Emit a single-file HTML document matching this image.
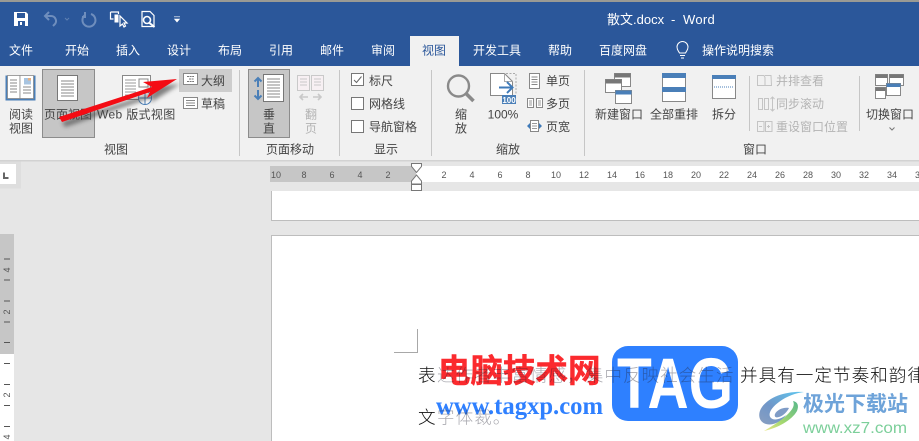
<!DOCTYPE html>
<html><head><meta charset="utf-8"><style>
html,body{margin:0;padding:0;background:#e6e6e6;width:919px;height:441px;overflow:hidden}
svg{display:block}
text{font-family:"Liberation Sans","Noto Sans CJK SC",sans-serif;font-size:12px;fill:#444}
.c{text-anchor:middle}
.w{fill:#fff}
.d{fill:#b4b4b4}
.r{font-size:9px;fill:#555;text-anchor:middle}
.vr{font-size:9px;fill:#555;text-anchor:middle}
.t{font-size:17.6px;fill:#111;font-weight:300}
.g{font-size:17.6px;fill:#a4a4a4;font-weight:300}
.o{font-size:17.6px;fill:#223;font-weight:300;opacity:.38}
</style></head><body>
<svg width="919" height="441" viewBox="0 0 919 441" xmlns="http://www.w3.org/2000/svg">
<defs><filter id="b" x="-20%" y="-50%" width="140%" height="200%"><feGaussianBlur stdDeviation="2.2"/></filter>
<linearGradient id="sw" x1="1" y1="0" x2="0" y2="1"><stop offset="0" stop-color="#5fc8f0"/><stop offset=".6" stop-color="#7096c8"/><stop offset="1" stop-color="#8a9fc0"/></linearGradient>
<linearGradient id="sg" x1="1" y1="0" x2="0" y2="1"><stop offset="0" stop-color="#58b88a"/><stop offset=".6" stop-color="#a5d870"/><stop offset="1" stop-color="#efe98a"/></linearGradient></defs>
<!-- backgrounds -->
<rect width="919" height="441" fill="#e6e6e6"/>
<rect width="919" height="2" fill="#9a9a94"/>
<rect y="2" width="919" height="64" fill="#2b579a"/>
<rect y="66" width="919" height="94" fill="#f1f1f1"/>
<rect y="160" width="919" height="1.500" fill="#d2d2d2"/>
<rect x="410" y="36" width="49" height="30" fill="#f1f1f1"/>
<!-- QAT -->
<path d="M14 12h12l2 2v12H14z" fill="#fff"/><rect x="17" y="13" width="8" height="5" fill="#2b579a"/><rect x="18" y="21" width="7" height="5" fill="#2b579a"/><rect x="20" y="22" width="2" height="3" fill="#fff"/>
<g fill="none" stroke="#6f8ebd" stroke-width="2"><path d="M45 16h6a5 5 0 0 1 4 8l-2 2"/><path d="M49 12l-4 4 4 4"/><path d="M91 14a6.500 6.500 0 1 1-6 1"/><path d="M85 12v5h-3"/></g>
<path d="M65 18l2 2 2-2" fill="none" stroke="#5f80b3"/>
<g fill="none" stroke="#fff" stroke-width="1.200"><path d="M110.500 12h8v2M110.500 12v7h3"/><rect x="114.500" y="14.500" width="4" height="8" fill="#fff" stroke="none"/><path d="M120 16l0 10 2.500-2 1.500 3 1.500-1-1.500-3h3z" fill="#2b579a"/><path d="M142 11.500h8l4 4v11h-12z"/><circle cx="147" cy="20" r="3.500" stroke-width="1.600"/><path d="M149.500 23l5 4" stroke-width="2"/></g>
<path d="M174 16.800h6M174.500 19h5l-2.500 3z" fill="#fff" stroke="#fff" stroke-width=".6"/>
<text x="607" y="24" style="font-size:13px" class="w">散文.docx</text><text x="671" y="24" style="font-size:13px" class="w">-</text><text x="683" y="24" style="font-size:13px;letter-spacing:.3px" class="w">Word</text>
<!-- tabs -->
<g class="tabs">
<text x="21" y="54.500" class="c w">文件</text><text x="77" y="54.500" class="c w">开始</text><text x="128" y="54.500" class="c w">插入</text><text x="179" y="54.500" class="c w">设计</text><text x="230" y="54.500" class="c w">布局</text><text x="281" y="54.500" class="c w">引用</text><text x="332" y="54.500" class="c w">邮件</text><text x="383" y="54.500" class="c w">审阅</text>
<text x="434" y="54.500" class="c" style="fill:#2b579a">视图</text>
<text x="497" y="54.500" class="c w">开发工具</text><text x="560" y="54.500" class="c w">帮助</text><text x="623" y="54.500" class="c w">百度网盘</text><text x="738" y="54.500" class="c w">操作说明搜索</text></g>
<path d="M679.500 53c-1-2-2.500-3-2.500-6a5.500 5.500 0 0 1 11 0c0 3-1.500 4-2.500 6zM680 55.500h5M681 58h3" fill="none" stroke="#fff"/>
<!-- selected -->
<rect x="42.500" y="69.500" width="52" height="68" fill="#c6c6c6" stroke="#8c8c8c"/>
<rect x="179" y="69" width="53" height="23" fill="#cdcdcd"/>
<rect x="248.500" y="69.500" width="41" height="68" fill="#c6c6c6" stroke="#8c8c8c"/>
<!-- seps -->
<g fill="#c6c6c6"><rect x="239" y="70" width="1" height="86"/><rect x="339" y="70" width="1" height="86"/><rect x="431" y="70" width="1" height="86"/><rect x="584" y="70" width="1" height="86"/><rect x="749" y="76" width="1" height="55"/><rect x="859" y="76" width="1" height="55"/></g>
<!-- read -->
<path d="M5.500 75.500h30v25h-30z" fill="#4a7fb8"/><rect x="7.500" y="75.500" width="12.500" height="23" fill="#fff" stroke="#8a8a8a" stroke-width=".8"/><rect x="20" y="75.500" width="13.500" height="23" fill="#fff" stroke="#8a8a8a" stroke-width=".8"/>
<path d="M10 80h7M10 83h7M10 86h7M10 89h7M10 92h7M23 87h8M23 90h8M23 93h8" stroke="#888"/><rect x="24" y="78" width="7" height="6.500" fill="#a8c4e0"/><rect x="28" y="78" width="3" height="2.500" fill="#e8b080"/>
<!-- doc -->
<rect x="57.500" y="75.500" width="20" height="25" fill="#fff" stroke="#777"/><path d="M61 81h13M61 84h13M61 87h13M61 90h13M61 93h13M61 96h13" stroke="#8a8a8a"/>
<!-- web -->
<rect x="122.500" y="75.500" width="28" height="24" fill="#fff" stroke="#888"/><path d="M125 80h11M125 83h11M125 86h11M125 89h11M125 92h11M125 95h11" stroke="#999"/><rect x="139" y="79" width="9" height="8" fill="none" stroke="#888"/>
<circle cx="145" cy="98" r="6.500" fill="#fff" stroke="#4a7fb8"/><path d="M138.500 98h13M145 91.500v13" stroke="#4a7fb8"/>
<!-- outline / draft -->
<rect x="183.500" y="73.500" width="14" height="11" fill="#fff" stroke="#888"/><path d="M187 76.500h7M189 79h5M187 81.500h7" stroke="#777" stroke-dasharray="2 .6"/>
<rect x="183.500" y="97.500" width="14" height="11" fill="#fff" stroke="#888"/><path d="M186 100.500h9M186 103h9M186 105.500h9" stroke="#888"/>
<!-- labels group 1 -->
<text x="21" y="118.500" class="c">阅读</text><text x="21" y="132.500" class="c">视图</text>
<text x="68" y="118.500" class="c">页面视图</text>
<text x="97" y="118.500" style="letter-spacing:.35px">Web 版式视图</text>
<text x="201" y="85">大纲</text><text x="201" y="108">草稿</text>
<text x="116" y="153.500" class="c">视图</text>
<!-- vertical -->
<rect x="263.500" y="74.500" width="20" height="27" fill="#fff" stroke="#777"/><path d="M267 79h13M267 82h13M267 85h13M267 88h13M267 91h13M267 94h13M267 97h13" stroke="#888"/>
<path d="M258 78v9M254.500 81.500L258 78l3.500 3.500M258 90v9M254.500 95.500L258 99l3.500-3.500" fill="none" stroke="#4a7fb8" stroke-width="2"/>
<text x="269" y="118.500" class="c">垂</text><text x="269" y="132.500" class="c">直</text>
<!-- flip disabled -->
<g fill="none" stroke="#c9c9c9"><rect x="297.500" y="75.500" width="12" height="15" fill="#f7f0f3"/><rect x="311.500" y="75.500" width="12" height="15" fill="#f7f0f3"/><path d="M300 79h7M300 82h7M300 85h7M314 79h7M314 82h7M314 85h7"/><path d="M300 97h8M303 94l-3 3 3 3M313 97h8M318 94l3 3-3 3" stroke-width="1.600"/></g>
<text x="311" y="118.500" class="c d">翻</text><text x="311" y="132.500" class="c d">页</text>
<text x="290" y="153.500" class="c">页面移动</text>
<!-- checks -->
<g fill="#fff" stroke="#777"><rect x="351.500" y="73.500" width="12" height="12"/><rect x="351.500" y="97.500" width="12" height="12"/><rect x="351.500" y="120.500" width="12" height="12"/></g>
<path d="M354 80l2.500 2.500 5-6" fill="none" stroke="#666"/>
<text x="369" y="85">标尺</text><text x="369" y="108">网格线</text><text x="369" y="131">导航窗格</text>
<text x="386" y="153.500" class="c">显示</text>
<!-- zoom -->
<circle cx="458.500" cy="86" r="10.500" fill="none" stroke="#8a8a8a" stroke-width="2.400"/><path d="M466.500 94l7 7" stroke="#8a8a8a" stroke-width="3.600"/>
<text x="461" y="118.500" class="c">缩</text><text x="461" y="132.500" class="c">放</text>
<path d="M490.500 73.500h14l8 8v14h-22z" fill="#fff" stroke="#888"/><path d="M504.500 73.500v8h8" fill="none" stroke="#aaa"/><path d="M506 73.500h10v20" fill="none" stroke="#aaa" stroke-dasharray="2 1.500"/>
<path d="M499 87.500h13M507 82l5.500 5.500-5.500 5.500" fill="none" stroke="#3f7ab8" stroke-width="2"/>
<rect x="502" y="95" width="14" height="9" fill="#4a7fb8"/><text x="509" y="103" class="c" style="font-size:8px;fill:#fff;font-weight:700">100</text>
<text x="503" y="118.500" class="c">100%</text>
<rect x="529.500" y="73.500" width="10" height="15" fill="#fff" stroke="#888"/><path d="M531.500 77h6M531.500 79.500h6M531.500 82h6M531.500 84.500h6" stroke="#888"/>
<g fill="#fff" stroke="#888"><rect x="527.500" y="98.500" width="6" height="9"/><rect x="536.500" y="98.500" width="6" height="9"/><rect x="530.500" y="120.500" width="8" height="11"/></g><path d="M529 101h3M529 103h3M529 105h3M538 101h3M538 103h3M538 105h3M532 123.500h5M532 126h5M532 128.500h5" stroke="#999"/>
<path d="M527 126l3-3v6zM542 126l-3-3v6z" fill="#3f7ab8"/>
<text x="546" y="85">单页</text><text x="546" y="108">多页</text><text x="546" y="131">页宽</text>
<text x="508" y="153.500" class="c">缩放</text>
<!-- new window -->
<g stroke="#888" fill="#fff"><rect x="614.500" y="73.500" width="16" height="13"/><rect x="605.500" y="79.500" width="16" height="13"/><rect x="615.500" y="90.500" width="16" height="13"/></g>
<rect x="614.500" y="73.500" width="16" height="4" fill="#777"/><rect x="605.500" y="79.500" width="16" height="4" fill="#777"/><rect x="615.500" y="90.500" width="16" height="4" fill="#4a7fb8"/>
<text x="619" y="118.500" class="c">新建窗口</text>
<rect x="662.500" y="73.500" width="23" height="28" fill="#fff" stroke="#888"/><rect x="662" y="73" width="24" height="5" fill="#4a7fb8"/><rect x="662" y="87" width="24" height="5" fill="#4a7fb8"/>
<text x="674" y="118.500" class="c">全部重排</text>
<rect x="712.500" y="75.500" width="23" height="23" fill="#fff" stroke="#888"/><rect x="712" y="75" width="24" height="4" fill="#4a7fb8"/><path d="M714 87h20" stroke="#4a7fb8" stroke-dasharray="1 1"/>
<text x="724" y="118.500" class="c">拆分</text>
<text x="755" y="153.500" class="c">窗口</text>
<!-- disabled -->
<g fill="none" stroke="#c4c4c4"><path d="M757.500 75.500h6.500l1 2v8h-7.500zM765 75.500h6l.5 10h-6.500"/><path d="M758.500 98.500h4v11h-4zM764.500 98.500h4v11h-4zM772.500 97v14M770.500 99l2-2 2 2M770.500 109l2 2 2-2"/><path d="M757.500 121.500h6.500v10h-6.500zM765.500 121.500h6.500v10h-6.500zM759 126.500h3M767 126.500h3M768.500 125v3"/></g>
<text x="776" y="85" class="d">并排查看</text><text x="776" y="108" class="d">同步滚动</text><text x="776" y="131" class="d">重设窗口位置</text>
<!-- switch -->
<g stroke="#888" fill="#fff"><rect x="875.500" y="74.500" width="12" height="11"/><rect x="889.500" y="74.500" width="14" height="11"/><rect x="875.500" y="87.500" width="10" height="11"/><rect x="886.500" y="83.500" width="14" height="12"/></g>
<rect x="875.500" y="74.500" width="12" height="3.500" fill="#777"/><rect x="889.500" y="74.500" width="14" height="3.500" fill="#777"/><rect x="875.500" y="87.500" width="10" height="3.500" fill="#777"/><rect x="886.500" y="83.500" width="14" height="3.500" fill="#4a7fb8"/>
<text x="890" y="118.500" class="c">切换窗口</text>
<path d="M889.500 127.500l2.500 2.500 2.500-2.500" fill="none" stroke="#777"/>
<!-- corner + rulers -->
<rect x="0" y="161.500" width="21" height="27" fill="#dedede"/><rect x="0" y="164" width="16" height="20" fill="#fff"/><path d="M4 172.500v5.500h4.500" stroke="#666" stroke-width="2" fill="none"/>
<rect x="270" y="166" width="146" height="16" fill="#c6c6c6"/><rect x="416" y="166" width="503" height="16" fill="#fff"/>
<g class="rr">
<text x="276" y="178" class="r">10</text><text x="304" y="178" class="r">8</text><text x="332" y="178" class="r">6</text><text x="360" y="178" class="r">4</text><text x="388" y="178" class="r">2</text>
<text x="444" y="178" class="r">2</text><text x="472" y="178" class="r">4</text><text x="500" y="178" class="r">6</text><text x="528" y="178" class="r">8</text><text x="556" y="178" class="r">10</text><text x="584" y="178" class="r">12</text><text x="612" y="178" class="r">14</text><text x="640" y="178" class="r">16</text><text x="668" y="178" class="r">18</text><text x="696" y="178" class="r">20</text><text x="724" y="178" class="r">22</text><text x="752" y="178" class="r">24</text><text x="780" y="178" class="r">26</text><text x="808" y="178" class="r">28</text><text x="836" y="178" class="r">30</text><text x="864" y="178" class="r">32</text><text x="892" y="178" class="r">34</text><text x="920" y="178" class="r">36</text></g>
<path d="M411.500 163.500h10v3l-5 6-5-6zM416.500 175l5 6v3h-10v-3zM411.500 184.500h10v6h-10z" fill="#fff" stroke="#777"/>
<!-- pages -->
<path d="M271.500 191v29.500H919V191z" fill="#fff"/><path d="M271.500 191v29.500H919" fill="none" stroke="#bdbdbd"/>
<rect x="271.500" y="235.500" width="660" height="220" fill="#fff" stroke="#bdbdbd"/>
<path d="M394 352.500h23.500V329" fill="none" stroke="#a8a8a8"/>
<!-- vertical ruler -->
<rect x="0" y="234" width="14" height="120" fill="#c6c6c6"/><rect x="0" y="354" width="14" height="87" fill="#fff"/>
<path d="M4 259h6M4 280h6M4 301h6M4 322h6M4 342.500h6M4 363.500h6M4 384.500h6M4 405.500h6M4 426.500h6" stroke="#555"/>
<text transform="translate(10,270) rotate(-90)" class="vr">4</text><text transform="translate(10,312) rotate(-90)" class="vr">2</text><text transform="translate(10,395) rotate(-90)" class="vr">2</text><text transform="translate(10,437) rotate(-90)" class="vr">4</text>
<!-- doc text -->
<text x="418" y="381.500" class="t">表</text>
<text x="740" y="381.500" class="t" style="letter-spacing:1px">并具有一定节奏和韵律的</text>
<text x="418" y="423.500" class="t">文</text>
<!-- arrow -->
<path d="M59 117L152 87l-9-5 34-3-30 19 3-6-88 30z" fill="#444" opacity=".65" filter="url(#b)" transform="translate(3,5)"/>
<path d="M59 117L152 87l-9-5 34-3-30 19 3-6-88 30z" fill="#f40c14"/>
<!-- watermark -->
<text x="438" y="382" style="font-size:32.500px;font-weight:700;fill:#fb2a2e;stroke:#fb2a2e;stroke-width:.5;font-family:'Noto Sans CJK SC',sans-serif">电脑技术网</text>
<text x="436" y="414" textLength="167" lengthAdjust="spacingAndGlyphs" style="font-size:25px;font-weight:700;fill:#2f80ff;font-family:'Liberation Serif',serif">www.tagxp.com</text>
<rect x="612" y="346" width="126" height="75" rx="16" fill="#2e80ff"/>
<text x="617" y="408" textLength="116" lengthAdjust="spacingAndGlyphs" style="font-size:71px;font-weight:700;fill:#fff">TAG</text>
<text x="437" y="381.500" class="o" style="letter-spacing:1px">达作者丰富情感，集中反映社会生活</text>
<text x="437" y="423.500" class="o" style="letter-spacing:1px">字体裁。</text>
<!-- swirl -->
<path d="M804 392c-17-1-34 4-42 15-5 7-3 15 4 17 8 2 16-3 20-9-5 4-12 6-15 3-4-4 1-11 8-16 8-6 17-9 25-10z" fill="url(#sw)"/>
<path d="M789 408c-6-1-12 2-14 6-1 3 1 4 4 3 4-1 8-5 10-9z" fill="#7f9cc6"/>
<path d="M764 431c14-3 28-11 33-20 2-5 1-9-4-10 2 4 0 8-5 13-7 7-16 12-24 17z" fill="url(#sg)"/>
<text x="803" y="411" textLength="105" lengthAdjust="spacingAndGlyphs" style="font-size:21px;font-weight:700;fill:#6ea3d9;font-family:'Noto Sans CJK SC',sans-serif">极光下载站</text>
<text x="803" y="433" textLength="104" lengthAdjust="spacingAndGlyphs" style="font-size:16px;fill:#7ccf9a;font-weight:400">www.xz7.com</text>
</svg>
</body></html>
